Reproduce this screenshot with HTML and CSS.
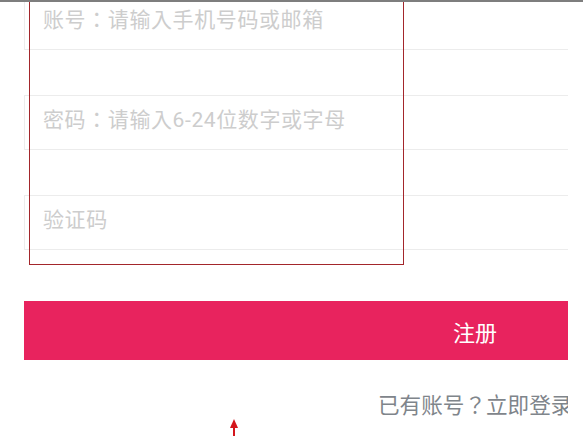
FILE: index.html
```html
<!DOCTYPE html>
<html lang="zh-TW">
<head>
    <meta charset="UTF-8">
    <meta name="viewport" content="width=device-width, initial-scale=1.0">
    <title>注册</title>
    <link rel="stylesheet" href="styles.css">
</head>
<body>

    <div class="top-bar"></div>

    <form class="register-form">
        <input class="field" type="text" placeholder="账号：请输入手机号码或邮箱">
        <input class="field" type="password" placeholder="密码：请输入6-24位数字或字母">
        <input class="field" type="text" placeholder="验证码">
        <button class="submit-btn" type="button">注册</button>
        <p class="login-link">已有账号？立即登录</p>
    </form>

    <!-- inspector overlay -->
    <div class="inspect-box"></div>
    <svg class="inspect-arrow" width="10" height="18" viewBox="0 0 10 18">
        <polygon points="5,0 9,9 1,9" fill="#d4161c"/>
        <rect x="4" y="8" width="2" height="10" fill="#d4161c"/>
    </svg>

</body>
</html>
```

FILE: styles.css
```css
* {
    margin: 0;
    padding: 0;
    box-sizing: border-box;
    font-family: 'Roboto', 'Noto Sans CJK TC', sans-serif;
}

body {
    background: #fff;
    width: 583px;
    height: 436px;
    overflow: hidden;
    position: relative;
}

.top-bar {
    height: 2px;
    background: #7e7e7e;
    position: relative;
    z-index: 2;
}

/* content is cut at the right edge, like the source capture */
.register-form {
    display: flex;
    flex-direction: column;
    margin-top: -7px;
    padding-left: 24px;
    width: 568px;
    overflow: hidden;
}

.field {
    height: 55px;
    margin-bottom: 45px;
    margin-right: -10px;
    padding: 0 18px 6px;
    border: 1px solid #ececec;
    background: #fff;
    font-size: 21px;
    letter-spacing: 0.6px;
    color: #333;
    outline: none;
}

.field:last-of-type {
    margin-bottom: 51px;
}

.field::placeholder {
    color: #cdcdcd;
}

.submit-btn {
    height: 59px;
    border: none;
    background: #e8235e;
    color: #fff;
    font-size: 22px;
    text-align: left;
    padding-left: 429px;
    cursor: pointer;
}

.login-link {
    margin-top: 33px;
    padding-left: 354px;
    white-space: nowrap;
    font-size: 21.6px;
    line-height: 26px;
    color: #7f858b;
}

.inspect-box {
    position: absolute;
    left: 29px;
    top: -2px;
    width: 375px;
    height: 267px;
    border: 1px solid #a3262b;
}

.inspect-arrow {
    position: absolute;
    left: 229px;
    top: 419px;
}
```
